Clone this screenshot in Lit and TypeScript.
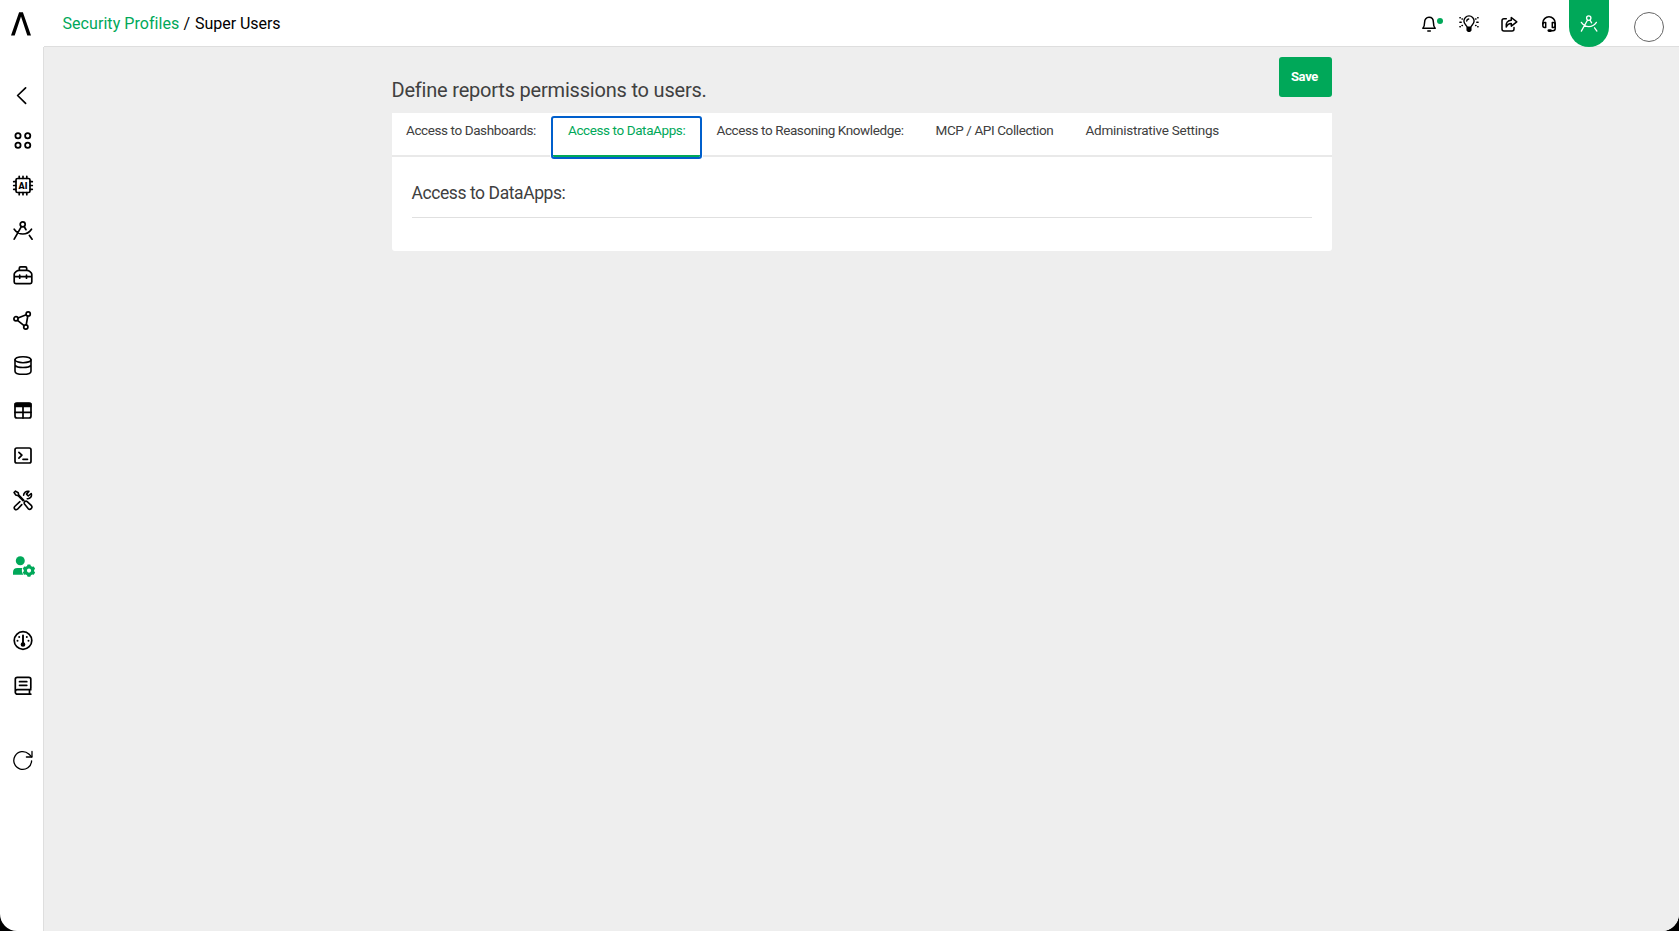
import { LitElement, html, css, svg } from "lit";
import { customElement, property } from "lit/decorators.js";
import { classMap } from "lit/directives/class-map.js";

const compass = svg`<circle cx="11.7" cy="6.3" r="2.5"/><path d="M10.2 8.8 3.2 21.2M13.3 8.8l1.7 2.9M18.4 17.4l2.7 3.8M3.2 11.2c2.3 3.2 5.2 4.8 8.6 4.8s6.5-1.6 8.7-4.8"/>`;

const icons: Record<string, unknown> = {
  back: svg`<path d="M14.6 4.8 6.6 12.5l8 7.8"/>`,
  apps: svg`<g stroke-width="1.8"><circle cx="7" cy="7.8" r="2.6"/><circle cx="16.7" cy="7.8" r="2.6"/><circle cx="7" cy="17.2" r="2.6"/><circle cx="16.7" cy="17.2" r="2.6"/></g>`,
  ai: svg`<rect x="5" y="5.500" width="14" height="14" rx="1.5"/><path d="M8.2 3.3v2M12 3.3v2M15.8 3.3v2M8.2 19.700v2M12 19.700v2M15.8 19.700v2M2.7 8.7h2M2.7 12.5h2M2.7 16.3h2M19.300 8.7h2M19.300 12.5h2M19.300 16.3h2"/><text class="chip" x="12" y="15.7" text-anchor="middle">AI</text>`,
  compass,
  box: svg`<path d="M3.2 19V11.500q0-1.300 1-2.100l1.500-1.300q1-.8 2.200-.8h8.200q1.200 0 2.200.8l1.500 1.300q1 .8 1 2.100V19q0 1.600-1.600 1.600H4.800Q3.200 20.600 3.200 19zM8.300 7V5.200q0-1.300 1.300-1.300h4.800q1.300 0 1.300 1.300V7M3.500 13.700h17.300M8.700 12.200v3M15.500 12.200v3"/>`,
  graph: svg`<circle cx="5" cy="10.8" r="2.1"/><circle cx="17.2" cy="5.900" r="2.1"/><circle cx="14.800" cy="19" r="2.1"/><path d="m7 10 8.200-3.300M6.500 12.300l6.600 5.300M16.800 8l-1.600 8.900"/>`,
  db: svg`<g stroke-width="1.6"><ellipse cx="12" cy="6.700" rx="8" ry="3"/><path d="M4 6.700v11.500c0 1.800 3.500 3.100 8 3.100s8-1.300 8-3.100V6.700M4 12.200c1 1.500 4 2.300 8 2.300s7-.8 8-2.300"/></g>`,
  table: svg`<rect x="4" y="5" width="16" height="15" rx="2"/><path d="M4 14.300h16M12 8v12"/><path fill="currentColor" d="M4.300 5.500h15.400v3H4.300z"/>`,
  terminal: svg`<rect x="4" y="5" width="16" height="15" rx="1.800"/><path d="m7.900 9.300 3 2.900-3 2.900M12 16.300h4.500"/>`,
  tools: svg`<g stroke-width="1.6"><path d="m3.100 4.500 1.400-1.400 2.700 1.700.6 2.300 5 5.300M3.100 4.500l1.700 2.600 2.400.7 4.800 4.900M13.300 15.700c-.7-1.700 1.300-3.300 2.900-2.100l4.300 4.100c1.500 2-1.200 4.600-3.200 3.100z"/><path d="m8.900 13.700-5.200 4.800c-1.500 2 .9 4.200 2.800 2.700l4.300-4.600M12.600 7.300c.1-2.700 2.500-4.600 5.300-3.900l-2.400 2.700 1.800 1.900 2.900-2.500c1 2.800-1 5.600-3.900 5.200"/></g>`,
  user: svg`<g fill="currentColor" stroke="none"><circle cx="9.300" cy="6.800" r="4.500"/><path d="M2 20.800v-2.500Q2 14 6.500 14h4.800a7 7 0 0 0 1.200 6.800z"/><path fill-rule="evenodd" d="m16.600 10.500 2.700 0 .6 1.500 1.300.7 1.600-.3 1.300 2.300-1 1.200v1.400l1 1.200-1.300 2.300-1.600-.3-1.300.7-.6 1.500h-2.700l-.6-1.500-1.300-.7-1.600.3-1.300-2.300 1-1.200v-1.400l-1-1.200 1.300-2.300 1.600.3 1.300-.7zM18 14.500a2.100 2.100 0 1 0 0 4.200 2.100 2.100 0 0 0 0-4.200z"/></g>`,
  gauge: svg`<circle cx="12" cy="12.500" r="8.800"/><path stroke-width="1.900" d="M12 7.500v8.500"/><circle cx="12" cy="16.500" r="1.500" fill="currentColor"/><g fill="currentColor" stroke="none"><circle cx="6.500" cy="12.800" r="1"/><circle cx="8.200" cy="9" r="1"/><circle cx="15.800" cy="9" r="1"/><circle cx="17.500" cy="12.800" r="1"/></g>`,
  book: svg`<path d="M19.800 16.700H6.500a2.200 2.200 0 0 0 0 4.500h13.300M4.300 18.800V6.300q0-2 2-2h11.500q2 0 2 2v9q0 1.400-1.300 1.400v4.500M8.500 8.700h7.300M8.500 12.300h7.300"/>`,
  refresh: svg`<g stroke-width="1.300"><path d="M20.600 12.900A8.900 8.900 0 1 1 17.800 6l2.800 2.700"/><path d="M21 3.400V9h-5.600"/></g>`,
  bell: svg`<path d="M5.800 16.300c1.600-1.500 1.800-3.300 1.800-6 0-3.100 1.700-5 4.400-5s4.400 1.900 4.400 5c0 2.700.2 4.500 1.800 6zM10.800 18.900h2.500"/>`,
  bulb: svg`<path stroke-width="1.4" d="M10.200 15.300c0-1.800-3.300-2.900-3.300-6.300a5.100 5.100 0 0 1 10.200 0c0 3.400-3.300 4.500-3.300 6.300zM9.700 9q.2-1.800 2-2"/><path fill="currentColor" d="M10.200 15.700h3.600v2.500l-1 1h-1.600l-1-1z"/><path d="M2.900 5.700h.4M5 7h.4M2.900 10.300h1.300M2.900 14.800h.4M5 13.500h.4M20.700 5.700h.4M18.600 7h.4M19.800 10.300h1.300M20.700 14.800h.4M18.600 13.500h.4"/>`,
  share: svg`<path d="M9.300 6.800H7q-2 0-2 2V17q0 2 2 2h8q2 0 2-2v-1.500"/><path d="M9.300 15c-.9-4 1.400-6.800 5-6.800V5.500l5.500 4.300-5.500 4.300v-2.500c-2.500 0-4 1-5 3.400z"/>`,
  headset: svg`<path d="M5.800 12V11a6.200 6.200 0 0 1 12.400 0v5.500q0 2.200-2.200 2.200h-3"/><path d="M8.700 10.500v5H7.500q-1.700 0-1.700-2.500t1.700-2.500zM15.300 10.500v5h1.200q1.700 0 1.700-2.500t-1.700-2.500z"/><path stroke-width="2.600" d="M11.800 18.600h1.800"/>`,
};

@customElement("ui-icon")
class UiIcon extends LitElement {
  @property() name = "";
  static styles = css`
    :host { display: block; width: 24px; height: 25px; }
    svg { display: block; fill: none; stroke: currentColor; stroke-width: var(--line, 1.7); stroke-linecap: round; stroke-linejoin: round; overflow: visible; }
    .chip { font: 900 9px Roboto, sans-serif; fill: currentColor; stroke: none; }
  `;
  render() {
    return html`<svg width="24" height="25" viewBox="0 0 24 25">${icons[this.name]}</svg>`;
  }
}

@customElement("app-root")
class AppRoot extends LitElement {
  static styles = css`
    :host { display: block; height: 100vh; background: #000; font-family: Roboto, "Liberation Sans", sans-serif; color: #404040; }
    * { box-sizing: border-box; }
    .app { height: 100%; display: grid; grid-template: 47px 1fr / 44px 1fr; border-radius: 0 0 17px 17px; overflow: hidden; background: #fff; }
    .logo { display: flex; justify-content: center; padding: 12px 2px 0 0; }
    .top { display: flex; border-bottom: 1px solid #dedede; height: 47px; color: #000; --line: 1.5; }
    .crumbs { flex: 1; padding: 14px 0 0 18.5px; font-size: 16px; line-height: 19px; white-space: pre; letter-spacing: 0.06px; }
    .crumbs a { color: #00a859; }
    .crumbs span { margin-left: 1px; letter-spacing: -0.05px; }
    .tool { width: 40px; height: 47px; display: flex; justify-content: center; padding-top: 12px; position: relative; }
    .dot { position: absolute; left: 28px; top: 18px; width: 6px; height: 6px; border-radius: 50%; background: #00a859; }
    .active { background: #00a859; color: #fff; border-radius: 0 0 20px 20px; padding-top: 11px; }
    .active ui-icon { transform: scale(.87); }
    .avatar { width: 30px; height: 30px; border: 1px solid #666; border-radius: 50%; margin: 12px 15px 0 25px; }
    .side { border-right: 1px solid #dedede; padding-top: 26px; color: #000; display: flex; flex-direction: column; }
    .item { height: 45px; padding: 10px 0 0 11px; flex: none; }
    .admin { margin-top: 21px; margin-bottom: 29px; color: #00a859; }
    .reload { margin-top: 30px; }
    .main { background: #eee; padding: 10px 0 0 348px; }
    .page { width: 940px; }
    .head { display: flex; justify-content: space-between; height: 56px; }
    h1 { margin: 21px 0 0 -0.5px; font-size: 20px; line-height: 24px; font-weight: 400; letter-spacing: -0.2px; }
    .save { width: 53px; height: 40px; border: 0; border-radius: 3px; padding: 0 2px 0 0; background: #00a859; color: #fff; font: 700 13px/16px Roboto, sans-serif; letter-spacing: -0.3px; }
    .card { background: #fff; height: 138px; border-radius: 0 0 3px 3px; }
    .tabs { display: flex; height: 44px; border-bottom: 2px solid #e9e9e9; padding-top: 5px; }
    .tab { height: 39px; padding: 4px 0 0 16px; font-size: 13.5px; line-height: 16px; letter-spacing: -0.4px; white-space: nowrap; border-bottom: 2px solid transparent; }
    .t0 { width: 161px; padding-left: 14px; }
    .t1 { width: 147px; padding-left: 15px; }
    .t2 { width: 219px; padding-left: 16.5px; }
    .t3 { width: 149px; padding-left: 16.5px; }
    .t4 { padding-left: 17.5px; letter-spacing: -0.25px; }
    .selected { color: #00a859; border-bottom-color: #00a859; outline: 2px solid #005fcc; border-radius: 1px; box-shadow: 0 0 0 3px #fff; }
    .body { padding: 22px 20px 0; }
    h2 { margin: 0; font-size: 17.5px; line-height: 28px; height: 39px; font-weight: 400; letter-spacing: -0.42px; text-indent: -0.5px; border-bottom: 1px solid #e0e0e0; }
  `;

  tabs = ["Access to Dashboards:", "Access to DataApps:", "Access to Reasoning Knowledge:", "MCP / API Collection", "Administrative Settings"];
  nav = ["back", "apps", "ai", "compass", "box", "graph", "db", "table", "terminal", "tools", "user", "gauge", "book", "refresh"];

  render() {
    return html`<div class="app">
      <div class="logo"><svg width="22" height="24" viewBox="0 0 22 24"><path d="M1 23.500 9.100.3h3.800L21 23.500h-3.700L11 4.600 4.700 23.500z"/></svg></div>
      <header class="top">
        <div class="crumbs"><a>Security Profiles</a> / <span>Super Users</span></div>
        ${["bell", "bulb", "share", "headset", "compass"].map((n) => html`<div class=${classMap({ tool: true, active: n === "compass" })}>
          <ui-icon .name=${n}></ui-icon>${n === "bell" ? html`<i class="dot"></i>` : ""}
        </div>`)}
        <div class="avatar"></div>
      </header>
      <nav class="side">
        ${this.nav.map((n) => html`<div class=${classMap({ item: true, admin: n === "user", reload: n === "refresh" })}><ui-icon .name=${n}></ui-icon></div>`)}
      </nav>
      <main class="main"><div class="page">
        <div class="head"><h1>Define reports permissions to users.</h1><button class="save">Save</button></div>
        <section class="card">
          <div class="tabs">${this.tabs.map((t, i) => html`<div class=${classMap({ tab: true, ["t" + i]: true, selected: i === 1 })}>${t}</div>`)}</div>
          <div class="body"><h2>Access to DataApps:</h2></div>
        </section>
      </div></main>
    </div>`;
  }
}
